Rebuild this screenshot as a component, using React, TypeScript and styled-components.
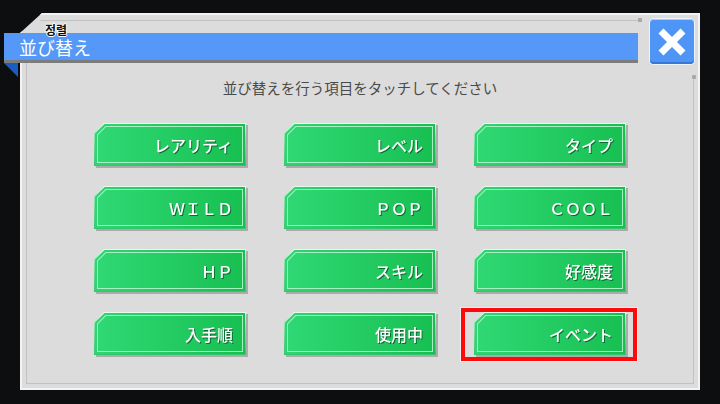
import styled, { createGlobalStyle } from 'styled-components';

const GlobalStyle = createGlobalStyle`
  html, body {
    margin: 0;
    width: 720px;
    height: 404px;
    overflow: hidden;
    background: #0c0e10;
    font-family: 'Noto Sans CJK JP', 'Noto Sans', sans-serif;
  }
`;

const Stage = styled.div`
  width: 720px;
  height: 404px;
  box-sizing: border-box;
  padding: 13px 20px 14px 20px;
  display: flex;
`;

const Panel = styled.div`
  position: relative;
  isolation: isolate;
  flex: 1;
  padding: 6px;
  display: flex;
  flex-direction: column;
  align-items: center;
  &::before {
    content: '';
    position: absolute;
    inset: 0;
    z-index: -1;
    clip-path: polygon(22px 0, 100% 0, 100% 100%, 0 100%, 0 20px);
    box-shadow: inset 0 0 0 2px #f3f3f3;
    background:
      radial-gradient(circle at 620px 7px, #a8a8a8 2px, transparent 2.5px),
      radial-gradient(circle at 674px 64px, #a8a8a8 2px, transparent 2.5px),
      linear-gradient(#c2c2c2, #c2c2c2) 20px 7px / 600px 1px no-repeat,
      linear-gradient(#c2c2c2, #c2c2c2) 6px 20px / 1px calc(100% - 26px) no-repeat,
      linear-gradient(#c2c2c2, #c2c2c2) 6px calc(100% - 6px) / calc(100% - 12px) 1px no-repeat,
      linear-gradient(#c2c2c2, #c2c2c2) calc(100% - 6px) 64px / 1px calc(100% - 70px) no-repeat,
      #dcdcdc;
  }
`;

const HeaderRow = styled.div`
  align-self: stretch;
  display: flex;
  align-items: flex-start;
  gap: 12px;
  height: 45px;
`;

const TitleBar = styled.div`
  position: relative;
  margin: 14px 0 0 -22px;
  width: 619px;
  height: 27px;
  padding-left: 15px;
  background: #5598f7;
  border-bottom: 3px solid #7c7c7c;
  display: flex;
  align-items: center;
  &::after {
    content: '';
    position: absolute;
    left: 0;
    bottom: -17px;
    width: 14px;
    height: 14px;
    background: #1c5cbf;
    clip-path: polygon(0 0, 100% 0, 100% 100%);
  }
`;

const TitleText = styled.span`
  color: #fff;
  font-size: 18px;
  line-height: 18px;
  margin-top: 1px;
`;

const SubLabel = styled.span`
  position: absolute;
  left: 41px;
  top: -10px;
  font-family: 'Noto Sans CJK KR', sans-serif;
  font-size: 12px;
  font-weight: 700;
  line-height: 13px;
  color: #111;
  text-shadow: 1px 0 0 #fff, -1px 0 0 #fff, 0 1px 0 #fff, 0 -1px 0 #fff;
`;

const CloseButton = styled.div`
  width: 44px;
  height: 45px;
  box-sizing: border-box;
  border-radius: 4px;
  background: #4f95f5;
  box-shadow: inset 0 1px 0 #a4cbff, inset 0 -2px 0 #3677d8, 0 0 0 1px #eef4fc;
  display: flex;
  align-items: center;
  justify-content: center;
`;

const Hint = styled.div`
  margin-top: 14px;
  font-size: 14.5px;
  line-height: 20px;
  color: #4a4a4a;
`;

const Grid = styled.div`
  margin-top: 25px;
  display: grid;
  grid-template-columns: repeat(3, 152px);
  grid-auto-rows: 43px;
  column-gap: 38px;
  row-gap: 20px;
`;

const Cell = styled.div`
  position: relative;
`;

const Highlight = styled.div`
  position: absolute;
  inset: -4px -11px -6px -13px;
  border: 4px solid #ff0a0a;
  box-shadow: 0 0 0 1px rgba(255, 255, 255, 0.5);
`;

const Shadow = styled.div`
  height: 100%;
  filter: drop-shadow(2px 2px 0 rgba(0, 0, 0, 0.22));
`;

const Edge = styled.div`
  height: 100%;
  box-sizing: border-box;
  padding: 1px;
  background: linear-gradient(180deg, #e6fbee, #8ee6ae 30%, #35c46c);
  clip-path: polygon(10px 0, 100% 0, 100% 100%, 0 100%, 0 10px);
`;

const Body = styled.div`
  height: 100%;
  box-sizing: border-box;
  padding: 2px;
  background: linear-gradient(90deg, #2ed672, #16bf50);
  clip-path: polygon(9.5px 0, 100% 0, 100% 100%, 0 100%, 0 9.5px);
`;

const Line = styled.div`
  height: 100%;
  box-sizing: border-box;
  padding: 1px;
  background: #a6efc0;
  clip-path: polygon(8.5px 0, 100% 0, 100% 100%, 0 100%, 0 8.5px);
`;

const Face = styled.div`
  height: 100%;
  box-sizing: border-box;
  padding-right: 9px;
  background: linear-gradient(90deg, #2fd874, #18c052);
  clip-path: polygon(8px 0, 100% 0, 100% 100%, 0 100%, 0 8px);
  display: flex;
  align-items: center;
  justify-content: flex-end;
  color: #fff;
  font-size: 16px;
  font-weight: 500;
  text-shadow: 1px 1px 0 #0c6a32;
`;

const items = [
  'レアリティ', 'レベル', 'タイプ',
  'ＷＩＬＤ', 'ＰＯＰ', 'ＣＯＯＬ',
  'ＨＰ', 'スキル', '好感度',
  '入手順', '使用中', 'イベント',
];

function SortButton({ label, selected }: { label: string; selected?: boolean }) {
  return (
    <Cell>
      {selected && <Highlight />}
      <Shadow>
        <Edge>
          <Body>
            <Line>
              <Face>{label}</Face>
            </Line>
          </Body>
        </Edge>
      </Shadow>
    </Cell>
  );
}

export default function App() {
  return (
    <>
      <GlobalStyle />
      <Stage>
        <Panel>
          <HeaderRow>
            <TitleBar>
              <SubLabel>정렬</SubLabel>
              <TitleText>並び替え</TitleText>
            </TitleBar>
            <CloseButton>
              <svg width="28" height="28" viewBox="0 0 28 28">
                <path d="M3 3 L25 25 M25 3 L3 25" stroke="#fff" strokeWidth="7" />
              </svg>
            </CloseButton>
          </HeaderRow>
          <Hint>並び替えを行う項目をタッチしてください</Hint>
          <Grid>
            {items.map((label) => (
              <SortButton key={label} label={label} selected={label === 'イベント'} />
            ))}
          </Grid>
        </Panel>
      </Stage>
    </>
  );
}
